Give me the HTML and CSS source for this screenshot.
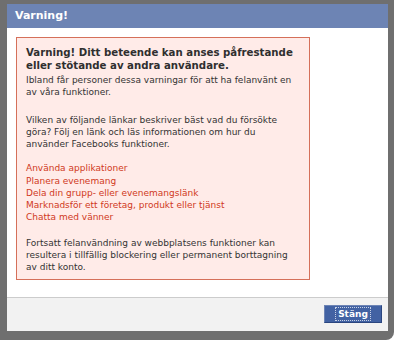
FILE: index.html
```html
<!DOCTYPE html>
<html lang="sv">
<head>
<meta charset="utf-8">
<title>Varning!</title>
<link rel="stylesheet" href="styles.css">
</head>
<body>
<div class="frame">
  <div class="dialog">
    <div class="title">Varning!</div>
    <div class="content">
      <div class="box">
        <h2 class="heading">Varning! Ditt beteende kan anses påfrestande eller stötande av andra användare.</h2>
        <p class="para p1">Ibland får personer dessa varningar för att ha felanvänt en av våra funktioner.</p>
        <p class="para p2">Vilken av följande länkar beskriver bäst vad du försökte göra? Följ en länk och läs informationen om hur du använder Facebooks funktioner.</p>
        <ul class="links">
          <li><a href="#">Använda applikationer</a></li>
          <li><a href="#">Planera evenemang</a></li>
          <li><a href="#">Dela din grupp- eller evenemangslänk</a></li>
          <li><a href="#">Marknadsför ett företag, produkt eller tjänst</a></li>
          <li><a href="#">Chatta med vänner</a></li>
        </ul>
        <p class="para p4">Fortsatt felanvändning av webbplatsens funktioner kan resultera i tillfällig blockering eller permanent borttagning av ditt konto.</p>
      </div>
    </div>
    <div class="footer">
      <button class="btn" type="button"><span class="btn-label">Stäng</span></button>
    </div>
  </div>
</div>
</body>
</html>
```

FILE: styles.css
```css
html, body {
  margin: 0;
  padding: 0;
  background: #ffffff;
}

body {
  font-family: "DejaVu Sans", "Liberation Sans", sans-serif;
  color: #333333;
}

.frame {
  width: 394px;
  box-sizing: border-box;
  padding: 4px 6px 9px 7px;
  background: #6f6f6f;
  border-bottom-right-radius: 8px;
}

.dialog {
  background: #ffffff;
}

.title {
  height: 24px;
  line-height: 24px;
  padding-left: 8px;
  background: #6d84b4;
  color: #ffffff;
  font-weight: bold;
  font-size: 11px;
}

.content {
  padding: 9px 0 17px 9px;
}

.box {
  width: 294px;
  box-sizing: border-box;
  border: 1px solid #d5705a;
  background: #ffebe8;
  padding: 9px 11px 6px 9px;
}

.heading {
  margin: 0 0 2px;
  font-size: 10.2px;
  line-height: 12.7px;
  font-weight: bold;
  color: #2f2f2f;
}

.para {
  margin: 0;
  font-size: 9px;
  line-height: 12px;
}

.p2 {
  margin-top: 16px;
}

.links {
  list-style: none;
  margin: 12px 0 0;
  padding: 0;
  font-size: 9px;
  line-height: 12.1px;
}

.links a {
  color: #d0391c;
  text-decoration: none;
}

.p4 {
  margin-top: 14px;
}

.footer {
  display: flex;
  justify-content: flex-end;
  border-top: 1px solid #cccccc;
  background: #f2f2f2;
  padding: 7px 6px 8px;
}

.btn {
  width: 58px;
  height: 18px;
  box-sizing: border-box;
  margin: 0;
  padding: 0;
  display: flex;
  align-items: center;
  justify-content: center;
  background: #4262a3;
  border: 1px solid #2b467f;
  border-top-color: #6d84b4;
  border-left-color: #6d84b4;
  color: #ffffff;
  font-family: "DejaVu Sans", "Liberation Sans", sans-serif;
  font-weight: bold;
  font-size: 9px;
}

.btn-label {
  padding: 1px 2px;
  outline: 1px dotted #c8d2e6;
}
```
